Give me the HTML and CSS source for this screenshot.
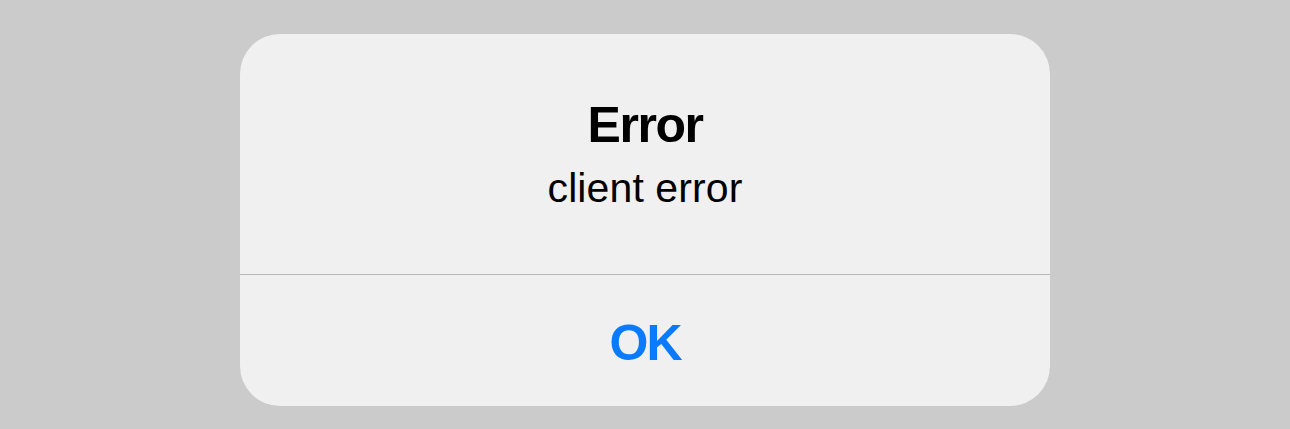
FILE: index.html
```html
<!DOCTYPE html>
<html lang="en">
<head>
<meta charset="utf-8">
<title>Error</title>
<link rel="stylesheet" href="styles.css">
</head>
<body>
  <div class="alert" role="alertdialog">
    <div class="alert-body">
      <h1 class="alert-title">Error</h1>
      <p class="alert-message">client error</p>
    </div>
    <div class="alert-actions">
      <button class="alert-button" type="button">OK</button>
    </div>
  </div>
</body>
</html>
```

FILE: styles.css
```css
html, body {
  margin: 0;
  padding: 0;
}

body {
  width: 1290px;
  height: 429px;
  background: #cbcbcb;
  font-family: "Liberation Sans", Arial, sans-serif;
  display: flex;
  justify-content: center;
  align-items: flex-start;
  padding-top: 34px;
  box-sizing: border-box;
  overflow: hidden;
}

.alert {
  width: 810px;
  height: 372px;
  background: #f0f0f0;
  border-radius: 40px;
  display: flex;
  flex-direction: column;
  overflow: hidden;
}

.alert-body {
  height: 241px;
  box-sizing: border-box;
  padding-top: 61px;
  text-align: center;
  border-bottom: 1px solid #b9b9b9;
}

.alert-title {
  margin: 0;
  font-size: 50px;
  line-height: 60px;
  font-weight: 700;
  letter-spacing: -1.5px;
  color: #000;
}

.alert-message {
  margin: 8px 0 0;
  font-size: 41px;
  line-height: 50px;
  font-weight: 400;
  letter-spacing: 0.1px;
  color: #000;
}

.alert-actions {
  flex: 1;
  display: flex;
}

.alert-button {
  flex: 1;
  border: 0;
  background: transparent;
  padding: 4px 0 0;
  margin: 0;
  font-family: inherit;
  font-size: 50px;
  line-height: 126px;
  font-weight: 700;
  letter-spacing: -2px;
  color: #0a7aff;
  cursor: pointer;
}
```
